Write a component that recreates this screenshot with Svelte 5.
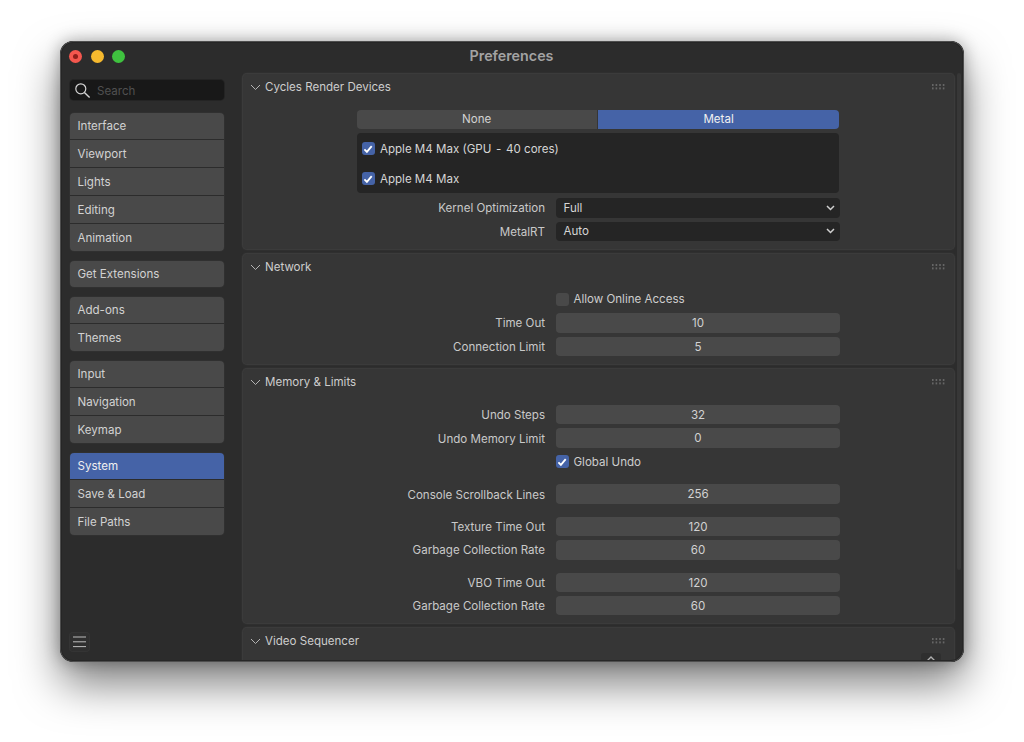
<script>
	const navGroups = [
		['Interface', 'Viewport', 'Lights', 'Editing', 'Animation'],
		['Get Extensions'],
		['Add-ons', 'Themes'],
		['Input', 'Navigation', 'Keymap'],
		['System', 'Save & Load', 'File Paths']
	];
	const active = 'System';
</script>

{#snippet chevron()}
	<svg class="chev" width="11" height="7" viewBox="0 0 11 7"><path d="M1 1l4.5 4.5L10 1" fill="none" stroke="#b4b4b4" stroke-width="1" /></svg>
{/snippet}

{#snippet grip()}
	<svg class="grip" width="13" height="6" viewBox="0 0 13 6" fill="#666">
		{#each [0, 3.6, 7.2, 10.8] as x}
			<rect {x} y="0" width="1.6" height="2" /><rect {x} y="3.4" width="1.6" height="2" />
		{/each}
	</svg>
{/snippet}

{#snippet check()}
	<span class="box on">
		<svg width="12" height="12" viewBox="0 0 12 12"><path d="M2.4 6.4l2.5 2.5 4.8-5.8" fill="none" stroke="#fff" stroke-width="1.8" /></svg>
	</span>
{/snippet}

{#snippet panelHead(title)}
	<header class="panel-head">
		{@render chevron()}
		<span>{title}</span>
		{@render grip()}
	</header>
{/snippet}

{#snippet num(label, value, cls = '')}
	<div class="row {cls}">
		<label>{label}</label>
		<div class="num">{value}</div>
	</div>
{/snippet}

{#snippet select(label, value)}
	<div class="row">
		<label>{label}</label>
		<div class="select">
			<span>{value}</span>
			<svg width="9" height="6" viewBox="0 0 9 6"><path d="M1 1l3.5 3.5L8 1" fill="none" stroke="#d0d0d0" stroke-width="1.5" /></svg>
		</div>
	</div>
{/snippet}

<div class="page">
	<div class="window">
		<div class="titlebar">
			<div class="lights">
				<span class="light red"><i></i></span>
				<span class="light yellow"></span>
				<span class="light green"></span>
			</div>
			<div class="title">Preferences</div>
		</div>

		<div class="content">
			<aside class="sidebar">
				<div class="search">
					<svg width="17" height="17" viewBox="0 0 17 17"><circle cx="6.8" cy="6.8" r="5" fill="none" stroke="#d4d4d4" stroke-width="1.2" /><path d="M10.4 10.4l5.2 5.2" stroke="#d4d4d4" stroke-width="1.4" /></svg>
					<span>Search</span>
				</div>

				{#each navGroups as group}
					<nav class="group">
						{#each group as item}
							<div class="item" class:active={item === active}>{item}</div>
						{/each}
					</nav>
				{/each}

				<button class="menu" aria-label="Menu">
					<svg width="13" height="12" viewBox="0 0 13 12"><path d="M0 1h13M0 5.8h13M0 10.6h13" stroke="#bcbcbc" stroke-width="1" /></svg>
				</button>
			</aside>

			<main class="main">
				<section class="panel p1">
					{@render panelHead('Cycles Render Devices')}
					<div class="wide">
						<div class="tabs">
							<div class="tab">None</div>
							<div class="tab on">Metal</div>
						</div>
						<div class="devices">
							<div class="device">{@render check()}<span>Apple M4 Max (GPU <span class="dash">-</span> 40 cores)</span></div>
							<div class="device">{@render check()}<span>Apple M4 Max</span></div>
						</div>
					</div>
					{@render select('Kernel Optimization', 'Full')}
					{@render select('MetalRT', 'Auto')}
				</section>

				<section class="panel p2">
					{@render panelHead('Network')}
					<div class="row check-row">
						<span></span>
						<div class="check"><span class="box"></span><span>Allow Online Access</span></div>
					</div>
					{@render num('Time Out', 10)}
					{@render num('Connection Limit', 5)}
				</section>

				<section class="panel p3">
					{@render panelHead('Memory & Limits')}
					{@render num('Undo Steps', 32, 'first')}
					{@render num('Undo Memory Limit', 0)}
					<div class="row check-row">
						<span></span>
						<div class="check">{@render check()}<span>Global Undo</span></div>
					</div>
					{@render num('Console Scrollback Lines', 256)}
					{@render num('Texture Time Out', 120, 'gap')}
					{@render num('Garbage Collection Rate', 60)}
					{@render num('VBO Time Out', 120, 'gap')}
					{@render num('Garbage Collection Rate', 60)}
				</section>

				<section class="panel p4">
					{@render panelHead('Video Sequencer')}
				</section>

				<div class="scrollbar"></div>
				<div class="up">
					<svg width="10" height="6" viewBox="0 0 10 6"><path d="M1 5l4-4 4 4" fill="none" stroke="#b0b0b0" stroke-width="1.3" /></svg>
				</div>
			</main>
		</div>
	</div>
</div>

<style>
	:global(body) {
		margin: 0;
		background: #fff;
	}

	.page {
		padding: 41px 60px 0;
		height: 701px;
		font-family: Inter, 'Liberation Sans', sans-serif;
		font-size: 11.55px;
		color: #cfcfcf;
	}

	.window {
		position: relative;
		width: 904px;
		height: 621px;
		box-sizing: border-box;
		background: #2c2c2c;
		border-radius: 13px;
		overflow: hidden;
	}

	.window::after {
		content: '';
		position: absolute;
		inset: 0;
		border-radius: 13px;
		box-shadow: inset 0 0 0 1px #4e4e4e, inset 0 0 0 2px #262626;
		pointer-events: none;
	}

	.page::before {
		content: '';
		position: absolute;
		left: 60px;
		top: 41px;
		width: 904px;
		height: 621px;
		border-radius: 13px;
		box-shadow: 0 22px 44px rgba(0, 0, 0, 0.5), 0 0 16px rgba(0, 0, 0, 0.3);
	}

	.titlebar {
		position: relative;
		height: 32px;
		box-sizing: border-box;
		display: flex;
		align-items: center;
		justify-content: center;
		padding: 0 1px 4px 0;
	}

	.title {
		font-size: 14.3px;
		font-weight: 600;
		color: #a3a3a3;
	}

	.lights {
		position: absolute;
		left: 9px;
		top: 8.5px;
		display: flex;
		gap: 8.6px;
	}

	.light {
		width: 13px;
		height: 13px;
		border-radius: 50%;
		display: flex;
		align-items: center;
		justify-content: center;
	}

	.red { background: #f4574e; }
	.red i {
		width: 5px;
		height: 5px;
		border-radius: 50%;
		background: #8f1f1a;
	}
	.yellow { background: #f6b92e; }
	.green { background: #3fc23f; }

	.content {
		display: flex;
		height: 589px;
	}

	.sidebar {
		position: relative;
		width: 154px;
		margin-left: 10px;
		flex-shrink: 0;
		padding-top: 7px;
	}

	.search {
		height: 20px;
		display: flex;
		align-items: center;
		gap: 6px;
		padding-left: 4px;
		margin-bottom: 13px;
		background: #181818;
		border-radius: 4px;
		box-shadow: 0 0 0 1px #242424;
		color: #505050;
	}

	.search span {
		padding-top: 1px;
	}

	.group {
		margin-bottom: 10px;
		border-radius: 4px;
		overflow: hidden;
		box-shadow: 0 0 0 1px #303030;
	}

	.item {
		height: 27px;
		line-height: 28px;
		margin-bottom: 1px;
		padding-left: 7.5px;
		background: #494949;
		color: #d2d2d2;
	}

	.item:first-child {
		height: 26px;
		line-height: 27px;
	}

	.item:last-child {
		margin-bottom: 0;
	}

	.item.active {
		background: #4563a7;
		color: #f0f0f0;
	}

	.menu {
		position: absolute;
		left: -1px;
		bottom: 10px;
		width: 21px;
		height: 20px;
		padding: 0;
		border: 0;
		border-radius: 4px;
		background: #2f2f2f;
		box-shadow: inset 0 0 0 1px #343434;
		display: flex;
		align-items: center;
		justify-content: center;
	}

	.main {
		position: relative;
		margin-left: 18px;
		width: 713px;
	}

	.panel {
		background: #363636;
		border-radius: 5px;
		box-shadow: 0 0 0 1px #2f2f2f, inset 0 0 0 1px #3b3b3b;
		margin-bottom: 3px;
		box-sizing: border-box;
		overflow: hidden;
	}

	.p1 { height: 177px; }
	.p2 { height: 112px; }
	.p3 { height: 256px; }
	.p4 { height: 40px; }

	.panel-head {
		height: 28px;
		display: flex;
		align-items: center;
		padding: 0 10px 0 8px;
		gap: 4px;
		color: #cdcdcd;
	}

	.panel-head span {
		flex: 1;
	}

	.chev,
	.grip {
		flex-shrink: 0;
	}

	.wide {
		margin: 9px 0 5px 114.7px;
		width: 482.8px;
	}

	.tabs {
		display: flex;
		gap: 1px;
		height: 19.3px;
		border-radius: 4px;
		overflow: hidden;
	}

	.tab {
		width: 240px;
		text-align: center;
		line-height: 19.3px;
		background: #494949;
		color: #d2d2d2;
	}

	.tab.on {
		flex: 1;
		background: #4563a7;
		color: #f0f0f0;
	}

	.devices {
		box-sizing: border-box;
		height: 60px;
		margin-top: 4px;
		background: #252525;
		border-radius: 4px;
		padding: 0.6px 5.3px 0;
		color: #d6d6d6;
	}

	.device {
		height: 30px;
		display: flex;
		align-items: center;
		gap: 5px;
	}

	.device > span:last-child {
		padding-top: 1px;
	}

	.dash {
		margin: 0 1.5px;
	}

	.box {
		width: 13px;
		height: 13px;
		border-radius: 3px;
		background: #494949;
		display: flex;
		align-items: center;
		justify-content: center;
		flex-shrink: 0;
	}

	.box.on {
		background: #4563a7;
	}

	.row {
		display: grid;
		grid-template-columns: 303px 284px;
		column-gap: 10.5px;
		align-items: center;
		height: 19.3px;
		margin-bottom: 4.2px;
	}

	.row.first {
		margin-top: 9px;
	}

	.row.gap {
		margin-top: 13px;
	}

	.row.check-row {
		margin-bottom: 4.5px;
	}

	.p2 .row.check-row {
		margin-top: 8.5px;
	}

	.p3 .row.check-row {
		margin-bottom: 13.2px;
	}

	label {
		text-align: right;
		color: #c9c9c9;
		padding-top: 1px;
	}

	.num {
		height: 19.3px;
		line-height: 20.3px;
		padding-left: 1px;
		box-sizing: border-box;
		text-align: center;
		background: #494949;
		border-radius: 4px;
		color: #d2d2d2;
	}

	.select {
		height: 19.3px;
		display: flex;
		align-items: center;
		justify-content: space-between;
		padding: 0 5px 0 8px;
		background: #252525;
		border-radius: 4px;
		color: #d6d6d6;
	}

	.check {
		display: flex;
		align-items: center;
		gap: 5px;
		color: #cdcdcd;
	}

	.scrollbar {
		position: absolute;
		left: 714.7px;
		top: 0;
		width: 4.3px;
		height: 497px;
		background: #373737;
		border-radius: 2px;
	}

	.up {
		position: absolute;
		left: 679px;
		top: 580px;
		width: 20px;
		height: 10px;
		background: #2f2f2f;
		border-radius: 3px 3px 0 0;
		display: flex;
		justify-content: center;
		padding-top: 3px;
		box-sizing: border-box;
	}
</style>
